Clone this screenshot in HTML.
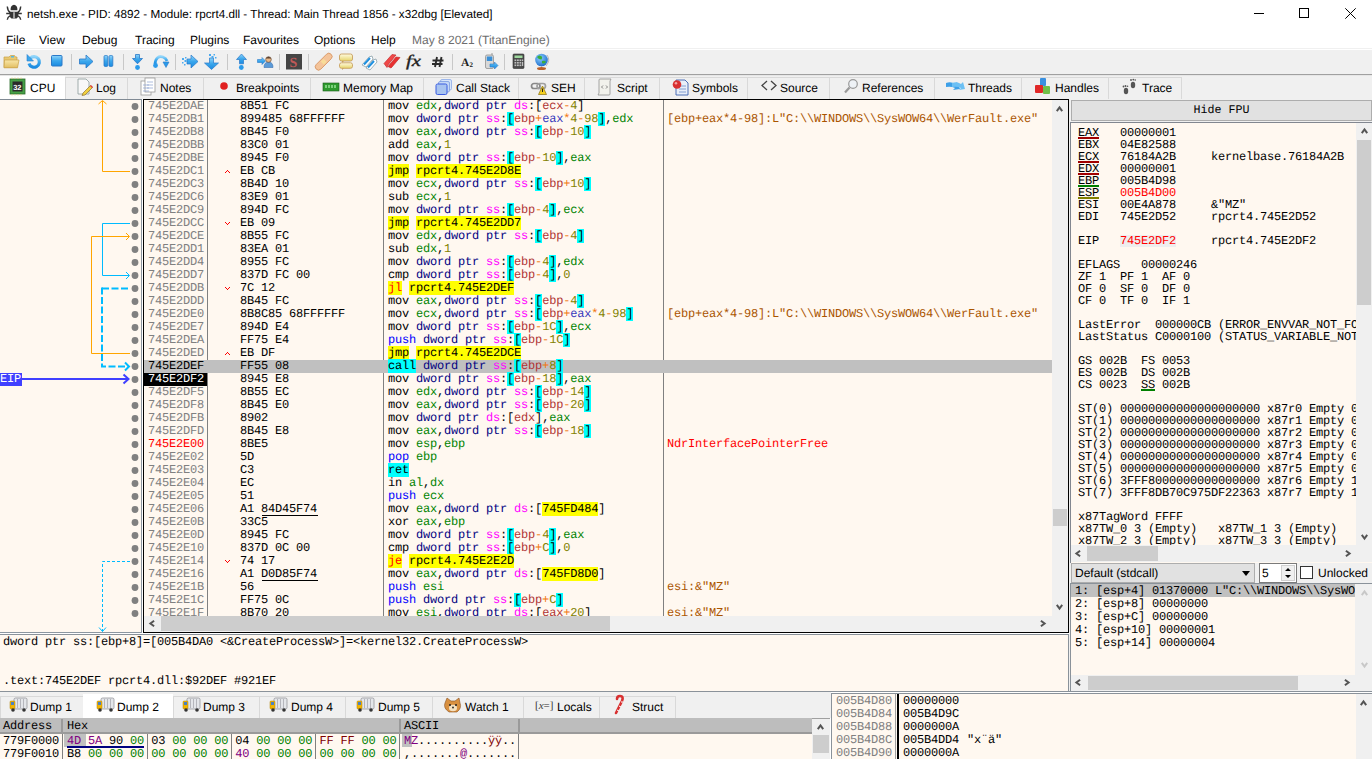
<!DOCTYPE html><html><head><meta charset="utf-8"><style>
*{box-sizing:border-box}
body{text-rendering:geometricPrecision;margin:0;width:1372px;height:759px;overflow:hidden;position:relative;background:#fff;font-family:"Liberation Sans",sans-serif;font-size:12px;color:#000}
.a{position:absolute}
.m{font-family:"Liberation Mono",monospace;font-size:12px;letter-spacing:-0.2px;white-space:pre;line-height:13px}
.s{font-family:"Liberation Sans",sans-serif;font-size:12px;white-space:pre}
.row{position:absolute;height:13px;line-height:13px;font-family:"Liberation Mono",monospace;font-size:12px;letter-spacing:-0.2px;white-space:pre}
.sb{position:absolute;background:#F0F0F0}
.thumb{position:absolute;background:#CDCDCD}
</style></head><body>

<div class="a" style="left:0;top:0;width:1372px;height:29px;background:#fff"></div>
<svg class="a" style="left:0;top:0" width="26" height="24" viewBox="0 0 26 24">
<path d="M7.3 6.5 Q7.6 11 10.5 12.8 M20.7 6.5 Q20.4 11 17.5 12.8 M6.2 13.5 H21.8 M10 15.8 Q7.6 16.8 7.3 19.8 M18 15.8 Q20.4 16.8 20.7 19.8" stroke="#333" stroke-width="1.4" fill="none"/>
<path d="M10.6 10.3 Q10.4 6.2 12.6 5.2 Q14 4.4 15.4 5.2 Q17.6 6.2 17.4 10.3 Z" fill="#333"/>
<path d="M9.6 11.8 H18.4 Q18.8 17.4 16.5 18.6 L11.5 18.6 Q9.2 17.4 9.6 11.8 Z" fill="#333"/>
<rect x="13.1" y="12.2" width="1.8" height="6.4" fill="#A8A8A8"/>
</svg>
<div class="a s" style="left:27px;top:8px;font-size:11.7px;color:#000">netsh.exe - PID: 4892 - Module: rpcrt4.dll - Thread: Main Thread 1856 - x32dbg [Elevated]</div>
<div class="a" style="left:1254px;top:13px;width:10px;height:1px;background:#000"></div>
<div class="a" style="left:1299px;top:8px;width:10px;height:10px;border:1px solid #000"></div>
<svg class="a" style="left:1345px;top:8px" width="11" height="11"><path d="M0.3 0.3 L10.7 10.7 M10.7 0.3 L0.3 10.7" stroke="#000" stroke-width="1"/></svg>
<div class="a s" style="left:6px;top:33px">File</div>
<div class="a s" style="left:39px;top:33px">View</div>
<div class="a s" style="left:82px;top:33px">Debug</div>
<div class="a s" style="left:135px;top:33px">Tracing</div>
<div class="a s" style="left:190px;top:33px">Plugins</div>
<div class="a s" style="left:243px;top:33px">Favourites</div>
<div class="a s" style="left:314px;top:33px">Options</div>
<div class="a s" style="left:371px;top:33px">Help</div>
<div class="a s" style="left:412px;top:33px;color:#6D6D6D">May 8 2021 (TitanEngine)</div>
<div class="a" style="left:0;top:48px;width:1372px;height:1px;background:#F0F0F0"></div>
<div class="a" style="left:0;top:50px;width:1372px;height:24px;background:#F0F0F0"></div>
<div class="a" style="left:0;top:74px;width:1372px;height:1px;background:#A0A0A0"></div>
<div class="a" style="left:0;top:75px;width:1372px;height:1px;background:#E6E6E6"></div>
<div class="a" style="left:0;top:76px;width:1372px;height:23px;background:#F0F0F0"></div>
<svg class="a" style="left:0;top:49px" width="560" height="25" viewBox="0 0 560 25">
<line x1="71.5" y1="5" x2="71.5" y2="21" stroke="#C8C8C8"/>
<line x1="123.5" y1="5" x2="123.5" y2="21" stroke="#C8C8C8"/>
<line x1="175.5" y1="5" x2="175.5" y2="21" stroke="#C8C8C8"/>
<line x1="227.5" y1="5" x2="227.5" y2="21" stroke="#C8C8C8"/>
<line x1="279.5" y1="5" x2="279.5" y2="21" stroke="#C8C8C8"/>
<line x1="308.5" y1="5" x2="308.5" y2="21" stroke="#C8C8C8"/>
<line x1="452.5" y1="5" x2="452.5" y2="21" stroke="#C8C8C8"/>
<line x1="504.5" y1="5" x2="504.5" y2="21" stroke="#C8C8C8"/>

<defs>
<linearGradient id="gb" x1="0" y1="0" x2="0" y2="1"><stop offset="0" stop-color="#8ED4FA"/><stop offset="0.5" stop-color="#3AA6EC"/><stop offset="1" stop-color="#1A8AE0"/></linearGradient>
<linearGradient id="gf" x1="0" y1="0" x2="0" y2="1"><stop offset="0" stop-color="#F8E6A8"/><stop offset="1" stop-color="#E2BE62"/></linearGradient>
<linearGradient id="gy" x1="0" y1="0" x2="0" y2="1"><stop offset="0" stop-color="#FFFBE0"/><stop offset="1" stop-color="#E6D46A"/></linearGradient>
<radialGradient id="gg" cx="0.4" cy="0.35" r="0.7"><stop offset="0" stop-color="#8ED0FF"/><stop offset="1" stop-color="#1A6ACC"/></radialGradient>
</defs>
<path d="M4 8 L9 8 L10.5 6.5 L14.5 6.5 L15.5 8 L17 8 L17 18.5 L4 18.5 Z" fill="#E8C870" stroke="#C8A048" stroke-width="0.7"/>
<rect x="11" y="7" width="3" height="1.5" fill="#5AB8E0"/>
<path d="M4.5 11 L19 11 L17.5 18.8 L4 18.8 Z" fill="url(#gf)" stroke="#C8A048" stroke-width="0.7"/>
<path d="M30 9.5 A5.3 5.3 0 1 1 29 14.5" fill="none" stroke="url(#gb)" stroke-width="3.2"/>
<path d="M27 5.5 L27 12 L33.5 12 Z" fill="#3AA6EC" stroke="#2A80D0" stroke-width="0.6"/>
<rect x="51.5" y="6.5" width="10.5" height="10.5" rx="1" fill="url(#gb)" stroke="#2A78C8" stroke-width="1"/>
<path d="M79.5 10 L86 10 L86 6 L93 12.5 L86 19 L86 15 L79.5 15 Z" fill="url(#gb)" stroke="#2A78C8" stroke-width="0.8"/>
<rect x="104" y="6.5" width="3.8" height="11" rx="1.2" fill="url(#gb)" stroke="#2A78C8" stroke-width="0.8"/><rect x="109" y="6.5" width="3.8" height="11" rx="1.2" fill="url(#gb)" stroke="#2A78C8" stroke-width="0.8"/>
<path d="M135.5 5.5 L139.5 5.5 L139.5 9.5 L142.5 9.5 L137.5 14.8 L132.5 9.5 L135.5 9.5 Z" fill="url(#gb)" stroke="#2A78C8" stroke-width="0.8"/><circle cx="137.5" cy="18.5" r="2.4" fill="#2A9AEA"/>
<path d="M155 15 Q156 6 163 8 Q166 9 167 12" fill="none" stroke="url(#gb)" stroke-width="2.8"/><path d="M163 13 L169 13 L166 18.5 Z" fill="#2A9AEA" stroke="#2A78C8" stroke-width="0.6"/><circle cx="155.5" cy="16.5" r="2.4" fill="#2A9AEA"/>
<path d="M187 10 L191 10 L191 6 L198 12.5 L191 19 L191 15 L187 15 Z" fill="url(#gb)" stroke="#2A78C8" stroke-width="0.7"/>
<g fill="#4AAAF0"><rect x="182" y="9" width="2" height="2"/><rect x="184.5" y="11" width="2" height="2"/><rect x="182" y="13" width="1.5" height="1.5"/><rect x="185" y="8" width="1.5" height="1.5"/><rect x="184" y="15" width="1.5" height="1.5"/></g>
<path d="M209.5 9 L213.5 9 L213.5 14 L218.5 14 L211.5 20.5 L204.5 14 L209.5 14 Z" fill="url(#gb)" stroke="#2A78C8" stroke-width="0.7"/>
<g fill="#4AAAF0"><rect x="209" y="5" width="2" height="2"/><rect x="211.5" y="7" width="2" height="2"/><rect x="213.5" y="5" width="1.5" height="1.5"/><rect x="215" y="8" width="1.5" height="1.5"/></g>
<path d="M241.5 5 L246.5 10.5 L243.5 10.5 L243.5 14.8 L239.5 14.8 L239.5 10.5 L236.5 10.5 Z" fill="url(#gb)" stroke="#2A78C8" stroke-width="0.7"/><circle cx="241.3" cy="18.5" r="2.4" fill="#2A9AEA"/>
<path d="M257.5 10.5 L262 10.5 L262 8.5 L265.5 12 L262 15.5 L262 13.5 L257.5 13.5 Z" fill="url(#gb)" stroke="#2A78C8" stroke-width="0.6"/>
<path d="M264 18.5 Q264 13 268.5 13 Q273 13 273 18.5 Z" fill="#5A9AD8" stroke="#3A70B0" stroke-width="0.6"/><circle cx="268.5" cy="10.5" r="2.8" fill="#E8B888" stroke="#5A4030" stroke-width="0.6"/><path d="M265.7 9.5 Q268.5 6 271.3 9.5" fill="#5A4030"/>
<rect x="286" y="5" width="16" height="15.5" fill="#454545"/><text x="289.5" y="17.5" font-family="Liberation Serif" font-size="14" font-weight="bold" fill="#C05858">S</text>
<g transform="rotate(-45 323.5 12.5)"><rect x="313" y="9.5" width="21" height="6.5" rx="3.2" fill="#F4C49A" stroke="#D89868" stroke-width="0.9"/><rect x="321.5" y="10.5" width="4" height="4.5" fill="#F8DC98"/></g>
<rect x="339.5" y="5" width="13" height="7" rx="2" fill="url(#gy)" stroke="#C8A060" stroke-width="0.9"/><path d="M342 12 L342 14 L344 12 Z" fill="#C8A060"/>
<rect x="339.5" y="13.8" width="13" height="5.5" rx="2" fill="url(#gy)" stroke="#C8A060" stroke-width="0.9"/><path d="M342 19.3 L342 21 L344 19.3 Z" fill="#C8A060"/>
<path d="M362 16 L369 8 L372 7 L373 10 L366 18 Z" fill="#fff" stroke="#8AA0A8" stroke-width="0.8"/><path d="M364 15.5 L370 9" stroke="#1E90E0" stroke-width="2"/>
<path d="M366 19 L373 11 L376 10 L377 13 L370 21 Z" fill="#fff" stroke="#8AA0A8" stroke-width="0.8"/><path d="M368 18.5 L374 12" stroke="#1E90E0" stroke-width="2"/>
<path d="M384 14.5 L392 5.5 L396 6 L388 16 L387 18.5 Z" fill="#F04848" stroke="#C02020" stroke-width="0.6"/><path d="M388 17.5 L396 8 L400 8.5 L392 18 L391 19 Z" fill="#E83030" stroke="#C02020" stroke-width="0.6"/>
<text x="406" y="17" font-family="Liberation Serif" font-size="16" font-style="italic" fill="#222" stroke="#222" stroke-width="0.35" textLength="15" lengthAdjust="spacingAndGlyphs">fx</text>
<path d="M437 8 L435 18 M441.5 8 L439.5 18 M432.5 11.5 H443.5 M432 15 H442.5" stroke="#2a2a2a" stroke-width="1.9"/>
<text x="461" y="17" font-family="Liberation Serif" font-size="11.5" font-weight="bold" fill="#222">A</text><text x="469.5" y="17.5" font-family="Liberation Serif" font-size="7" font-weight="bold" fill="#222">2</text>
<rect x="485.5" y="6" width="8" height="13.5" rx="1.5" fill="#D8D8D8" stroke="#909090" stroke-width="0.8"/><rect x="486.8" y="7.5" width="5.5" height="4.5" fill="#3A90D8"/><path d="M492 6 L492 4" stroke="#888" stroke-width="0.8"/>
<path d="M490 15 L494.5 15 L494.5 13 L498 16.5 L494.5 20 L494.5 18 L490 18 Z" fill="url(#gb)" stroke="#2A78C8" stroke-width="0.6"/>
<rect x="513" y="5" width="11" height="14.5" rx="1" fill="#4A4A4A" stroke="#333" stroke-width="0.6"/><rect x="514.5" y="6.5" width="8" height="2.5" fill="#9ED89E"/>
<g fill="#BEBEBE"><rect x="514.5" y="10.5" width="1.8" height="1.6"/><rect x="517" y="10.5" width="1.8" height="1.6"/><rect x="519.5" y="10.5" width="1.8" height="1.6"/><rect x="522" y="10.5" width="1.2" height="1.6"/><rect x="514.5" y="13" width="1.8" height="1.6"/><rect x="517" y="13" width="1.8" height="1.6"/><rect x="519.5" y="13" width="1.8" height="1.6"/><rect x="522" y="13" width="1.2" height="4"/><rect x="514.5" y="15.5" width="1.8" height="1.6"/><rect x="517" y="15.5" width="1.8" height="1.6"/><rect x="519.5" y="15.5" width="1.8" height="1.6"/></g>
<path d="M547 6 Q551 11 546 17" fill="none" stroke="#B8B8B8" stroke-width="1"/>
<circle cx="541.5" cy="11" r="6.3" fill="url(#gg)"/><path d="M537 8 Q539 5.5 541 7 Q543 8 541.5 10.5 Q539 11 537 8 Z M542 12 Q545 11 546 13 Q544 15.5 542 14 Z" fill="#3AAE3A"/>
<path d="M541.5 17.5 V19" stroke="#999" stroke-width="1"/><ellipse cx="541.5" cy="19.5" rx="4.5" ry="1.5" fill="#B8602A"/>

</svg>
<div class="a" style="left:0px;top:76px;width:65px;height:23px;background:#fff"></div>
<div class="a s" style="left:30px;top:81px">CPU</div>
<div class="a" style="left:65px;top:77px;width:63px;height:22px;background:#F0F0F0;border:1px solid #D9D9D9;border-bottom:none"></div>
<div class="a s" style="left:96px;top:81px">Log</div>
<div class="a" style="left:127px;top:77px;width:77px;height:22px;background:#F0F0F0;border:1px solid #D9D9D9;border-bottom:none"></div>
<div class="a s" style="left:160px;top:81px">Notes</div>
<div class="a" style="left:203px;top:77px;width:108px;height:22px;background:#F0F0F0;border:1px solid #D9D9D9;border-bottom:none"></div>
<div class="a s" style="left:236px;top:81px">Breakpoints</div>
<div class="a" style="left:310px;top:77px;width:114px;height:22px;background:#F0F0F0;border:1px solid #D9D9D9;border-bottom:none"></div>
<div class="a s" style="left:343px;top:81px">Memory Map</div>
<div class="a" style="left:423px;top:77px;width:96px;height:22px;background:#F0F0F0;border:1px solid #D9D9D9;border-bottom:none"></div>
<div class="a s" style="left:456px;top:81px">Call Stack</div>
<div class="a" style="left:518px;top:77px;width:67px;height:22px;background:#F0F0F0;border:1px solid #D9D9D9;border-bottom:none"></div>
<div class="a s" style="left:551px;top:81px">SEH</div>
<div class="a" style="left:584px;top:77px;width:76px;height:22px;background:#F0F0F0;border:1px solid #D9D9D9;border-bottom:none"></div>
<div class="a s" style="left:617px;top:81px">Script</div>
<div class="a" style="left:659px;top:77px;width:89px;height:22px;background:#F0F0F0;border:1px solid #D9D9D9;border-bottom:none"></div>
<div class="a s" style="left:692px;top:81px">Symbols</div>
<div class="a" style="left:747px;top:77px;width:83px;height:22px;background:#F0F0F0;border:1px solid #D9D9D9;border-bottom:none"></div>
<div class="a s" style="left:780px;top:81px">Source</div>
<div class="a" style="left:829px;top:77px;width:106px;height:22px;background:#F0F0F0;border:1px solid #D9D9D9;border-bottom:none"></div>
<div class="a s" style="left:862px;top:81px">References</div>
<div class="a" style="left:934px;top:77px;width:88px;height:22px;background:#F0F0F0;border:1px solid #D9D9D9;border-bottom:none"></div>
<div class="a s" style="left:968px;top:81px">Threads</div>
<div class="a" style="left:1021px;top:77px;width:88px;height:22px;background:#F0F0F0;border:1px solid #D9D9D9;border-bottom:none"></div>
<div class="a s" style="left:1055px;top:81px">Handles</div>
<div class="a" style="left:1108px;top:77px;width:74px;height:22px;background:#F0F0F0;border:1px solid #D9D9D9;border-bottom:none"></div>
<div class="a s" style="left:1142px;top:81px">Trace</div>
<svg class="a" style="left:0;top:75px" width="1200" height="24" viewBox="0 0 1200 24">

<rect x="10" y="4" width="15" height="15" fill="#46A046" stroke="#2A6A2A" stroke-width="0.8"/>
<g stroke="#E8D080" stroke-width="0.8"><path d="M12 4 V2.5 M15 4 V2.5 M18 4 V2.5 M21 4 V2.5 M12 19 V20.5 M15 19 V20.5 M18 19 V20.5 M21 19 V20.5"/></g>
<rect x="12.5" y="6.5" width="10" height="10" fill="#2a2a2a"/><text x="13.2" y="14.6" font-family="Liberation Sans" font-size="7.5" font-weight="bold" fill="#fff">32</text>
<path d="M78 4 L86 4 L89 7 L89 19 L78 19 Z" fill="#F8F8F8" stroke="#8A9A9A" stroke-width="0.8"/><path d="M83 18 L90.5 10.5 L92.5 12.5 L85 20 L82 20.5 Z" fill="#F0D040" stroke="#806020" stroke-width="0.6"/><path d="M90.5 10.5 L92.5 12.5" stroke="#E04040" stroke-width="1.5"/>
<rect x="141" y="6" width="10" height="14" fill="#fff" stroke="#999" stroke-width="0.8"/><rect x="145" y="3" width="10" height="14" fill="#fff" stroke="#999" stroke-width="0.8"/><path d="M143 10 H149 M143 13 H149 M143 16 H149 M147 7 H153 M147 10 H153 M147 13 H153" stroke="#8AA0D0" stroke-width="0.7"/>
<circle cx="224" cy="11" r="3.8" fill="#E02020"/>
<rect x="323" y="8" width="16" height="8" fill="#2E9A2E" stroke="#1A5A1A" stroke-width="0.6"/><g fill="#7CD07C"><rect x="325" y="10" width="2" height="3"/><rect x="328" y="10" width="2" height="3"/><rect x="331" y="10" width="2" height="3"/><rect x="334" y="10" width="2" height="3"/></g>
<rect x="440.5" y="4.5" width="11" height="10.5" rx="1.5" fill="#D8E6FA" stroke="#8AAAE8" stroke-width="0.8"/><rect x="438.5" y="6.5" width="11" height="10.5" rx="1.5" fill="#C4D8F6" stroke="#7A9AE0" stroke-width="0.8"/><rect x="436" y="9" width="11" height="10.5" rx="1.5" fill="#A8C4F0" stroke="#3A5CE0" stroke-width="1"/>
<rect x="531.5" y="8.5" width="8.5" height="5" rx="2.5" fill="none" stroke="#888" stroke-width="1.7"/><rect x="537" y="8.5" width="8.5" height="5" rx="2.5" fill="none" stroke="#A0A0A0" stroke-width="1.7"/><path d="M538.5 19.5 L542.5 11 L546.5 19.5 Z" fill="#F4D020" stroke="#8A7010" stroke-width="0.7"/><path d="M542.5 13.5 V17" stroke="#222" stroke-width="1"/>
<path d="M599 5 Q599 4 600 4 L611 4 L610 6 L610 19 Q610 20 609 20 L598 20 L599 18 Z" fill="#F2F2EC" stroke="#909090" stroke-width="0.8"/><path d="M603 10.5 L601.5 12 L603 13.5 M606 10.5 L607.5 12 L606 13.5" stroke="#666" stroke-width="0.8" fill="none"/>
<path d="M676 5 L685 5 L688 8 L688 20 L676 20 Z" fill="#E8EEF8" stroke="#3A60B0" stroke-width="0.9"/><path d="M679 11 H686 M679 14 H686 M679 17 H686" stroke="#6A8AC8" stroke-width="0.8"/><circle cx="677" cy="9.5" r="4.3" fill="#D83030"/><circle cx="676" cy="8.3" r="1.3" fill="#F4A0A0"/>
<path d="M767 6 L762 10.5 L767 15 M771 6 L776 10.5 L771 15" stroke="#444" stroke-width="1.3" fill="none"/>
<circle cx="853" cy="9" r="4.3" fill="#EEF2F6" stroke="#999" stroke-width="1.2"/><path d="M849.5 12.5 L845 17.5" stroke="#999" stroke-width="2.2"/>
<path d="M946 8 Q951 6 955 9 L957 7 L960 14 L953 15 L955 13 Q951 11 946 12 Z" fill="#3EA0E8"/><path d="M952 8 Q957 6 961 9 L963 7 L965 14 L959 15 L961 13 Q957 11 952 12 Z" fill="#6CC0F4"/>
<rect x="1040" y="3" width="6" height="8" rx="1" fill="#3A90E0"/><rect x="1035" y="10" width="8" height="8" rx="1" fill="#E02828"/><rect x="1043" y="11" width="7" height="8" rx="1" fill="#70C048"/>
<g fill="#555"><ellipse cx="1126" cy="16" rx="2.2" ry="3.3"/><ellipse cx="1133" cy="10" rx="2.2" ry="3.3"/><circle cx="1123.5" cy="11.5" r="0.9"/><circle cx="1125.5" cy="11" r="0.9"/><circle cx="1127.5" cy="11.3" r="0.8"/><circle cx="1131" cy="5" r="0.9"/><circle cx="1133.3" cy="4.6" r="0.9"/><circle cx="1135.2" cy="5" r="0.8"/></g>

</svg>
<div class="a" style="left:0;top:99px;width:142px;height:534px;background:#FFF8F0;border-top:1px solid #808A94;border-right:1px solid #8C96A0;border-bottom:1px solid #8C96A0"></div>
<div class="a" style="left:143px;top:99px;width:926px;height:534px;background:#FFF8F0;border:1px solid #000"></div>
<div class="a" style="left:207px;top:100px;width:1px;height:516px;background:#808080"></div>
<div class="a" style="left:383px;top:100px;width:1px;height:516px;background:#808080"></div>
<div class="a" style="left:663px;top:100px;width:1px;height:516px;background:#808080"></div>
<div class="a" style="left:144px;top:100px;width:908px;height:516px;overflow:hidden">
<div class="row" style="left:4px;top:0px;color:#808080">745E2DAE</div>
<div class="row" style="left:96px;top:0px;color:#000">8B51 FC</div>
<div class="row" style="left:244px;top:0px"><span style="color:#000;">mov</span> <span style="color:#008300;">edx</span><span style="color:#000;">,</span><span style="color:#000080;">dword ptr </span><span style="color:#FF00FF;">ds</span><span style="color:#000;">:</span><span style="color:#000;">[</span><span style="color:#B03434;">ecx</span><span style="color:#F27711;">-</span><span style="color:#828200;">4</span><span style="color:#000;">]</span></div>
<div class="row" style="left:4px;top:13px;color:#808080">745E2DB1</div>
<div class="row" style="left:96px;top:13px;color:#000">899485 68FFFFFF</div>
<div class="row" style="left:244px;top:13px"><span style="color:#000;">mov</span> <span style="color:#000080;">dword ptr </span><span style="color:#FF00FF;">ss</span><span style="color:#000;">:</span><span style="color:#000;background:#00FFFF;">[</span><span style="color:#B03434;">ebp</span><span style="color:#F27711;">+</span><span style="color:#3838BC;">eax</span><span style="color:#F27711;">*</span><span style="color:#828200;">4</span><span style="color:#F27711;">-</span><span style="color:#828200;">98</span><span style="color:#000;background:#00FFFF;">]</span><span style="color:#000;">,</span><span style="color:#008300;">edx</span></div>
<div class="row" style="left:523px;top:13px;color:#AA5500">[ebp+eax*4-98]:L&quot;C:\\WINDOWS\\SysWOW64\\WerFault.exe&quot;</div>
<div class="row" style="left:4px;top:26px;color:#808080">745E2DB8</div>
<div class="row" style="left:96px;top:26px;color:#000">8B45 F0</div>
<div class="row" style="left:244px;top:26px"><span style="color:#000;">mov</span> <span style="color:#008300;">eax</span><span style="color:#000;">,</span><span style="color:#000080;">dword ptr </span><span style="color:#FF00FF;">ss</span><span style="color:#000;">:</span><span style="color:#000;background:#00FFFF;">[</span><span style="color:#B03434;">ebp</span><span style="color:#F27711;">-</span><span style="color:#828200;">10</span><span style="color:#000;background:#00FFFF;">]</span></div>
<div class="row" style="left:4px;top:39px;color:#808080">745E2DBB</div>
<div class="row" style="left:96px;top:39px;color:#000">83C0 01</div>
<div class="row" style="left:244px;top:39px"><span style="color:#000;">add</span> <span style="color:#008300;">eax</span><span style="color:#000;">,</span><span style="color:#828200;">1</span></div>
<div class="row" style="left:4px;top:52px;color:#808080">745E2DBE</div>
<div class="row" style="left:96px;top:52px;color:#000">8945 F0</div>
<div class="row" style="left:244px;top:52px"><span style="color:#000;">mov</span> <span style="color:#000080;">dword ptr </span><span style="color:#FF00FF;">ss</span><span style="color:#000;">:</span><span style="color:#000;background:#00FFFF;">[</span><span style="color:#B03434;">ebp</span><span style="color:#F27711;">-</span><span style="color:#828200;">10</span><span style="color:#000;background:#00FFFF;">]</span><span style="color:#000;">,</span><span style="color:#008300;">eax</span></div>
<div class="row" style="left:4px;top:65px;color:#808080">745E2DC1</div>
<div class="a" style="left:81px;top:72px;width:1px;height:1px;background:#FF0000"></div>
<div class="a" style="left:82px;top:71px;width:1px;height:1px;background:#FF0000"></div>
<div class="a" style="left:83px;top:70px;width:1px;height:1px;background:#FF0000"></div>
<div class="a" style="left:84px;top:71px;width:1px;height:1px;background:#FF0000"></div>
<div class="a" style="left:85px;top:72px;width:1px;height:1px;background:#FF0000"></div>
<div class="row" style="left:96px;top:65px;color:#000">EB CB</div>
<div class="row" style="left:244px;top:65px"><span style="color:#000;background:#FFFF00;">jmp</span> <span style="color:#000;background:#FFFF00;">rpcrt4.745E2D8E</span></div>
<div class="row" style="left:4px;top:78px;color:#808080">745E2DC3</div>
<div class="row" style="left:96px;top:78px;color:#000">8B4D 10</div>
<div class="row" style="left:244px;top:78px"><span style="color:#000;">mov</span> <span style="color:#008300;">ecx</span><span style="color:#000;">,</span><span style="color:#000080;">dword ptr </span><span style="color:#FF00FF;">ss</span><span style="color:#000;">:</span><span style="color:#000;background:#00FFFF;">[</span><span style="color:#B03434;">ebp</span><span style="color:#F27711;">+</span><span style="color:#828200;">10</span><span style="color:#000;background:#00FFFF;">]</span></div>
<div class="row" style="left:4px;top:91px;color:#808080">745E2DC6</div>
<div class="row" style="left:96px;top:91px;color:#000">83E9 01</div>
<div class="row" style="left:244px;top:91px"><span style="color:#000;">sub</span> <span style="color:#008300;">ecx</span><span style="color:#000;">,</span><span style="color:#828200;">1</span></div>
<div class="row" style="left:4px;top:104px;color:#808080">745E2DC9</div>
<div class="row" style="left:96px;top:104px;color:#000">894D FC</div>
<div class="row" style="left:244px;top:104px"><span style="color:#000;">mov</span> <span style="color:#000080;">dword ptr </span><span style="color:#FF00FF;">ss</span><span style="color:#000;">:</span><span style="color:#000;background:#00FFFF;">[</span><span style="color:#B03434;">ebp</span><span style="color:#F27711;">-</span><span style="color:#828200;">4</span><span style="color:#000;background:#00FFFF;">]</span><span style="color:#000;">,</span><span style="color:#008300;">ecx</span></div>
<div class="row" style="left:4px;top:117px;color:#808080">745E2DCC</div>
<div class="a" style="left:81px;top:122px;width:1px;height:1px;background:#FF0000"></div>
<div class="a" style="left:82px;top:123px;width:1px;height:1px;background:#FF0000"></div>
<div class="a" style="left:83px;top:124px;width:1px;height:1px;background:#FF0000"></div>
<div class="a" style="left:84px;top:123px;width:1px;height:1px;background:#FF0000"></div>
<div class="a" style="left:85px;top:122px;width:1px;height:1px;background:#FF0000"></div>
<div class="row" style="left:96px;top:117px;color:#000">EB 09</div>
<div class="row" style="left:244px;top:117px"><span style="color:#000;background:#FFFF00;">jmp</span> <span style="color:#000;background:#FFFF00;">rpcrt4.745E2DD7</span></div>
<div class="row" style="left:4px;top:130px;color:#808080">745E2DCE</div>
<div class="row" style="left:96px;top:130px;color:#000">8B55 FC</div>
<div class="row" style="left:244px;top:130px"><span style="color:#000;">mov</span> <span style="color:#008300;">edx</span><span style="color:#000;">,</span><span style="color:#000080;">dword ptr </span><span style="color:#FF00FF;">ss</span><span style="color:#000;">:</span><span style="color:#000;background:#00FFFF;">[</span><span style="color:#B03434;">ebp</span><span style="color:#F27711;">-</span><span style="color:#828200;">4</span><span style="color:#000;background:#00FFFF;">]</span></div>
<div class="row" style="left:4px;top:143px;color:#808080">745E2DD1</div>
<div class="row" style="left:96px;top:143px;color:#000">83EA 01</div>
<div class="row" style="left:244px;top:143px"><span style="color:#000;">sub</span> <span style="color:#008300;">edx</span><span style="color:#000;">,</span><span style="color:#828200;">1</span></div>
<div class="row" style="left:4px;top:156px;color:#808080">745E2DD4</div>
<div class="row" style="left:96px;top:156px;color:#000">8955 FC</div>
<div class="row" style="left:244px;top:156px"><span style="color:#000;">mov</span> <span style="color:#000080;">dword ptr </span><span style="color:#FF00FF;">ss</span><span style="color:#000;">:</span><span style="color:#000;background:#00FFFF;">[</span><span style="color:#B03434;">ebp</span><span style="color:#F27711;">-</span><span style="color:#828200;">4</span><span style="color:#000;background:#00FFFF;">]</span><span style="color:#000;">,</span><span style="color:#008300;">edx</span></div>
<div class="row" style="left:4px;top:169px;color:#808080">745E2DD7</div>
<div class="row" style="left:96px;top:169px;color:#000">837D FC 00</div>
<div class="row" style="left:244px;top:169px"><span style="color:#000;">cmp</span> <span style="color:#000080;">dword ptr </span><span style="color:#FF00FF;">ss</span><span style="color:#000;">:</span><span style="color:#000;background:#00FFFF;">[</span><span style="color:#B03434;">ebp</span><span style="color:#F27711;">-</span><span style="color:#828200;">4</span><span style="color:#000;background:#00FFFF;">]</span><span style="color:#000;">,</span><span style="color:#828200;">0</span></div>
<div class="row" style="left:4px;top:182px;color:#808080">745E2DDB</div>
<div class="a" style="left:81px;top:187px;width:1px;height:1px;background:#FF0000"></div>
<div class="a" style="left:82px;top:188px;width:1px;height:1px;background:#FF0000"></div>
<div class="a" style="left:83px;top:189px;width:1px;height:1px;background:#FF0000"></div>
<div class="a" style="left:84px;top:188px;width:1px;height:1px;background:#FF0000"></div>
<div class="a" style="left:85px;top:187px;width:1px;height:1px;background:#FF0000"></div>
<div class="row" style="left:96px;top:182px;color:#000">7C 12</div>
<div class="row" style="left:244px;top:182px"><span style="color:#FF0000;background:#FFFF00;">jl</span> <span style="color:#000;background:#FFFF00;">rpcrt4.745E2DEF</span></div>
<div class="row" style="left:4px;top:195px;color:#808080">745E2DDD</div>
<div class="row" style="left:96px;top:195px;color:#000">8B45 FC</div>
<div class="row" style="left:244px;top:195px"><span style="color:#000;">mov</span> <span style="color:#008300;">eax</span><span style="color:#000;">,</span><span style="color:#000080;">dword ptr </span><span style="color:#FF00FF;">ss</span><span style="color:#000;">:</span><span style="color:#000;background:#00FFFF;">[</span><span style="color:#B03434;">ebp</span><span style="color:#F27711;">-</span><span style="color:#828200;">4</span><span style="color:#000;background:#00FFFF;">]</span></div>
<div class="row" style="left:4px;top:208px;color:#808080">745E2DE0</div>
<div class="row" style="left:96px;top:208px;color:#000">8B8C85 68FFFFFF</div>
<div class="row" style="left:244px;top:208px"><span style="color:#000;">mov</span> <span style="color:#008300;">ecx</span><span style="color:#000;">,</span><span style="color:#000080;">dword ptr </span><span style="color:#FF00FF;">ss</span><span style="color:#000;">:</span><span style="color:#000;background:#00FFFF;">[</span><span style="color:#B03434;">ebp</span><span style="color:#F27711;">+</span><span style="color:#3838BC;">eax</span><span style="color:#F27711;">*</span><span style="color:#828200;">4</span><span style="color:#F27711;">-</span><span style="color:#828200;">98</span><span style="color:#000;background:#00FFFF;">]</span></div>
<div class="row" style="left:523px;top:208px;color:#AA5500">[ebp+eax*4-98]:L&quot;C:\\WINDOWS\\SysWOW64\\WerFault.exe&quot;</div>
<div class="row" style="left:4px;top:221px;color:#808080">745E2DE7</div>
<div class="row" style="left:96px;top:221px;color:#000">894D E4</div>
<div class="row" style="left:244px;top:221px"><span style="color:#000;">mov</span> <span style="color:#000080;">dword ptr </span><span style="color:#FF00FF;">ss</span><span style="color:#000;">:</span><span style="color:#000;background:#00FFFF;">[</span><span style="color:#B03434;">ebp</span><span style="color:#F27711;">-</span><span style="color:#828200;">1C</span><span style="color:#000;background:#00FFFF;">]</span><span style="color:#000;">,</span><span style="color:#008300;">ecx</span></div>
<div class="row" style="left:4px;top:234px;color:#808080">745E2DEA</div>
<div class="row" style="left:96px;top:234px;color:#000">FF75 E4</div>
<div class="row" style="left:244px;top:234px"><span style="color:#0000FF;">push</span> <span style="color:#000080;">dword ptr </span><span style="color:#FF00FF;">ss</span><span style="color:#000;">:</span><span style="color:#000;background:#00FFFF;">[</span><span style="color:#B03434;">ebp</span><span style="color:#F27711;">-</span><span style="color:#828200;">1C</span><span style="color:#000;background:#00FFFF;">]</span></div>
<div class="row" style="left:4px;top:247px;color:#808080">745E2DED</div>
<div class="a" style="left:81px;top:254px;width:1px;height:1px;background:#FF0000"></div>
<div class="a" style="left:82px;top:253px;width:1px;height:1px;background:#FF0000"></div>
<div class="a" style="left:83px;top:252px;width:1px;height:1px;background:#FF0000"></div>
<div class="a" style="left:84px;top:253px;width:1px;height:1px;background:#FF0000"></div>
<div class="a" style="left:85px;top:254px;width:1px;height:1px;background:#FF0000"></div>
<div class="row" style="left:96px;top:247px;color:#000">EB DF</div>
<div class="row" style="left:244px;top:247px"><span style="color:#000;background:#FFFF00;">jmp</span> <span style="color:#000;background:#FFFF00;">rpcrt4.745E2DCE</span></div>
<div class="a" style="left:0;top:260px;width:908px;height:13px;background:#C0C0C0"></div>
<div class="row" style="left:4px;top:260px;color:#000">745E2DEF</div>
<div class="row" style="left:96px;top:260px;color:#000">FF55 08</div>
<div class="row" style="left:244px;top:260px"><span style="color:#000;background:#00FFFF;">call</span> <span style="color:#000080;">dword ptr </span><span style="color:#FF00FF;">ss</span><span style="color:#000;">:</span><span style="color:#000;background:#00FFFF;">[</span><span style="color:#B03434;">ebp</span><span style="color:#F27711;">+</span><span style="color:#828200;">8</span><span style="color:#000;background:#00FFFF;">]</span></div>
<div class="a" style="left:0;top:273px;width:63px;height:13px;background:#000"></div>
<div class="row" style="left:4px;top:273px;color:#fff">745E2DF2</div>
<div class="row" style="left:96px;top:273px;color:#000">8945 E8</div>
<div class="row" style="left:244px;top:273px"><span style="color:#000;">mov</span> <span style="color:#000080;">dword ptr </span><span style="color:#FF00FF;">ss</span><span style="color:#000;">:</span><span style="color:#000;background:#00FFFF;">[</span><span style="color:#B03434;">ebp</span><span style="color:#F27711;">-</span><span style="color:#828200;">18</span><span style="color:#000;background:#00FFFF;">]</span><span style="color:#000;">,</span><span style="color:#008300;">eax</span></div>
<div class="row" style="left:4px;top:286px;color:#808080">745E2DF5</div>
<div class="row" style="left:96px;top:286px;color:#000">8B55 EC</div>
<div class="row" style="left:244px;top:286px"><span style="color:#000;">mov</span> <span style="color:#008300;">edx</span><span style="color:#000;">,</span><span style="color:#000080;">dword ptr </span><span style="color:#FF00FF;">ss</span><span style="color:#000;">:</span><span style="color:#000;background:#00FFFF;">[</span><span style="color:#B03434;">ebp</span><span style="color:#F27711;">-</span><span style="color:#828200;">14</span><span style="color:#000;background:#00FFFF;">]</span></div>
<div class="row" style="left:4px;top:299px;color:#808080">745E2DF8</div>
<div class="row" style="left:96px;top:299px;color:#000">8B45 E0</div>
<div class="row" style="left:244px;top:299px"><span style="color:#000;">mov</span> <span style="color:#008300;">eax</span><span style="color:#000;">,</span><span style="color:#000080;">dword ptr </span><span style="color:#FF00FF;">ss</span><span style="color:#000;">:</span><span style="color:#000;background:#00FFFF;">[</span><span style="color:#B03434;">ebp</span><span style="color:#F27711;">-</span><span style="color:#828200;">20</span><span style="color:#000;background:#00FFFF;">]</span></div>
<div class="row" style="left:4px;top:312px;color:#808080">745E2DFB</div>
<div class="row" style="left:96px;top:312px;color:#000">8902</div>
<div class="row" style="left:244px;top:312px"><span style="color:#000;">mov</span> <span style="color:#000080;">dword ptr </span><span style="color:#FF00FF;">ds</span><span style="color:#000;">:</span><span style="color:#000;">[</span><span style="color:#B03434;">edx</span><span style="color:#000;">]</span><span style="color:#000;">,</span><span style="color:#008300;">eax</span></div>
<div class="row" style="left:4px;top:325px;color:#808080">745E2DFD</div>
<div class="row" style="left:96px;top:325px;color:#000">8B45 E8</div>
<div class="row" style="left:244px;top:325px"><span style="color:#000;">mov</span> <span style="color:#008300;">eax</span><span style="color:#000;">,</span><span style="color:#000080;">dword ptr </span><span style="color:#FF00FF;">ss</span><span style="color:#000;">:</span><span style="color:#000;background:#00FFFF;">[</span><span style="color:#B03434;">ebp</span><span style="color:#F27711;">-</span><span style="color:#828200;">18</span><span style="color:#000;background:#00FFFF;">]</span></div>
<div class="row" style="left:4px;top:338px;color:#FF0000">745E2E00</div>
<div class="row" style="left:96px;top:338px;color:#000">8BE5</div>
<div class="row" style="left:244px;top:338px"><span style="color:#000;">mov</span> <span style="color:#008300;">esp</span><span style="color:#000;">,</span><span style="color:#008300;">ebp</span></div>
<div class="row" style="left:523px;top:338px;color:#FF0000">NdrInterfacePointerFree</div>
<div class="row" style="left:4px;top:351px;color:#808080">745E2E02</div>
<div class="row" style="left:96px;top:351px;color:#000">5D</div>
<div class="row" style="left:244px;top:351px"><span style="color:#0000FF;">pop</span> <span style="color:#008300;">ebp</span></div>
<div class="row" style="left:4px;top:364px;color:#808080">745E2E03</div>
<div class="row" style="left:96px;top:364px;color:#000">C3</div>
<div class="row" style="left:244px;top:364px"><span style="color:#000;background:#00FFFF;">ret</span></div>
<div class="row" style="left:4px;top:377px;color:#808080">745E2E04</div>
<div class="row" style="left:96px;top:377px;color:#000">EC</div>
<div class="row" style="left:244px;top:377px"><span style="color:#000;">in</span> <span style="color:#008300;">al</span><span style="color:#000;">,</span><span style="color:#008300;">dx</span></div>
<div class="row" style="left:4px;top:390px;color:#808080">745E2E05</div>
<div class="row" style="left:96px;top:390px;color:#000">51</div>
<div class="row" style="left:244px;top:390px"><span style="color:#0000FF;">push</span> <span style="color:#008300;">ecx</span></div>
<div class="row" style="left:4px;top:403px;color:#808080">745E2E06</div>
<div class="a" style="left:118px;top:415px;width:56px;height:1px;background:#000"></div>
<div class="row" style="left:96px;top:403px;color:#000">A1 84D45F74</div>
<div class="row" style="left:244px;top:403px"><span style="color:#000;">mov</span> <span style="color:#008300;">eax</span><span style="color:#000;">,</span><span style="color:#000080;">dword ptr </span><span style="color:#FF00FF;">ds</span><span style="color:#000;">:</span><span style="color:#000;">[</span><span style="color:#000;background:#FFFF00;">745FD484</span><span style="color:#000;">]</span></div>
<div class="row" style="left:4px;top:416px;color:#808080">745E2E0B</div>
<div class="row" style="left:96px;top:416px;color:#000">33C5</div>
<div class="row" style="left:244px;top:416px"><span style="color:#000;">xor</span> <span style="color:#008300;">eax</span><span style="color:#000;">,</span><span style="color:#008300;">ebp</span></div>
<div class="row" style="left:4px;top:429px;color:#808080">745E2E0D</div>
<div class="row" style="left:96px;top:429px;color:#000">8945 FC</div>
<div class="row" style="left:244px;top:429px"><span style="color:#000;">mov</span> <span style="color:#000080;">dword ptr </span><span style="color:#FF00FF;">ss</span><span style="color:#000;">:</span><span style="color:#000;background:#00FFFF;">[</span><span style="color:#B03434;">ebp</span><span style="color:#F27711;">-</span><span style="color:#828200;">4</span><span style="color:#000;background:#00FFFF;">]</span><span style="color:#000;">,</span><span style="color:#008300;">eax</span></div>
<div class="row" style="left:4px;top:442px;color:#808080">745E2E10</div>
<div class="row" style="left:96px;top:442px;color:#000">837D 0C 00</div>
<div class="row" style="left:244px;top:442px"><span style="color:#000;">cmp</span> <span style="color:#000080;">dword ptr </span><span style="color:#FF00FF;">ss</span><span style="color:#000;">:</span><span style="color:#000;background:#00FFFF;">[</span><span style="color:#B03434;">ebp</span><span style="color:#F27711;">+</span><span style="color:#828200;">C</span><span style="color:#000;background:#00FFFF;">]</span><span style="color:#000;">,</span><span style="color:#828200;">0</span></div>
<div class="row" style="left:4px;top:455px;color:#808080">745E2E14</div>
<div class="a" style="left:81px;top:460px;width:1px;height:1px;background:#FF0000"></div>
<div class="a" style="left:82px;top:461px;width:1px;height:1px;background:#FF0000"></div>
<div class="a" style="left:83px;top:462px;width:1px;height:1px;background:#FF0000"></div>
<div class="a" style="left:84px;top:461px;width:1px;height:1px;background:#FF0000"></div>
<div class="a" style="left:85px;top:460px;width:1px;height:1px;background:#FF0000"></div>
<div class="row" style="left:96px;top:455px;color:#000">74 17</div>
<div class="row" style="left:244px;top:455px"><span style="color:#FF0000;background:#FFFF00;">je</span> <span style="color:#000;background:#FFFF00;">rpcrt4.745E2E2D</span></div>
<div class="row" style="left:4px;top:468px;color:#808080">745E2E16</div>
<div class="a" style="left:118px;top:480px;width:56px;height:1px;background:#000"></div>
<div class="row" style="left:96px;top:468px;color:#000">A1 D0D85F74</div>
<div class="row" style="left:244px;top:468px"><span style="color:#000;">mov</span> <span style="color:#008300;">eax</span><span style="color:#000;">,</span><span style="color:#000080;">dword ptr </span><span style="color:#FF00FF;">ds</span><span style="color:#000;">:</span><span style="color:#000;">[</span><span style="color:#000;background:#FFFF00;">745FD8D0</span><span style="color:#000;">]</span></div>
<div class="row" style="left:4px;top:481px;color:#808080">745E2E1B</div>
<div class="row" style="left:96px;top:481px;color:#000">56</div>
<div class="row" style="left:244px;top:481px"><span style="color:#0000FF;">push</span> <span style="color:#008300;">esi</span></div>
<div class="row" style="left:523px;top:481px;color:#AA5500">esi:&amp;&quot;MZ&quot;</div>
<div class="row" style="left:4px;top:494px;color:#808080">745E2E1C</div>
<div class="row" style="left:96px;top:494px;color:#000">FF75 0C</div>
<div class="row" style="left:244px;top:494px"><span style="color:#0000FF;">push</span> <span style="color:#000080;">dword ptr </span><span style="color:#FF00FF;">ss</span><span style="color:#000;">:</span><span style="color:#000;background:#00FFFF;">[</span><span style="color:#B03434;">ebp</span><span style="color:#F27711;">+</span><span style="color:#828200;">C</span><span style="color:#000;background:#00FFFF;">]</span></div>
<div class="row" style="left:4px;top:507px;color:#808080">745E2E1F</div>
<div class="row" style="left:96px;top:507px;color:#000">8B70 20</div>
<div class="row" style="left:244px;top:507px"><span style="color:#000;">mov</span> <span style="color:#008300;">esi</span><span style="color:#000;">,</span><span style="color:#000080;">dword ptr </span><span style="color:#FF00FF;">ds</span><span style="color:#000;">:</span><span style="color:#000;">[</span><span style="color:#B03434;">eax</span><span style="color:#F27711;">+</span><span style="color:#828200;">20</span><span style="color:#000;">]</span></div>
<div class="row" style="left:523px;top:507px;color:#AA5500">esi:&amp;&quot;MZ&quot;</div>
</div>
<div class="sb" style="left:1052px;top:100px;width:16px;height:516px"></div>
<div class="thumb" style="left:1053px;top:509px;width:14px;height:17px"></div>
<svg class="a" style="left:0;top:0;overflow:visible" width="1" height="1"><path d="M1056.8 111.1 L1059.5 107.4 L1062.2 111.1" stroke="#555555" stroke-width="2.0" fill="none" stroke-linejoin="miter"/></svg>
<svg class="a" style="left:0;top:0;overflow:visible" width="1" height="1"><path d="M1056.8 604.9 L1059.5 608.6 L1062.2 604.9" stroke="#555555" stroke-width="2.0" fill="none" stroke-linejoin="miter"/></svg>
<div class="sb" style="left:144px;top:616px;width:924px;height:16px"></div>
<div class="thumb" style="left:161px;top:616px;width:449px;height:15px"></div>
<svg class="a" style="left:0;top:0;overflow:visible" width="1" height="1"><path d="M154.1 620.8 L150.4 623.5 L154.1 626.2" stroke="#555555" stroke-width="2.0" fill="none" stroke-linejoin="miter"/></svg>
<svg class="a" style="left:0;top:0;overflow:visible" width="1" height="1"><path d="M1040.9 620.8 L1044.6 623.5 L1040.9 626.2" stroke="#555555" stroke-width="2.0" fill="none" stroke-linejoin="miter"/></svg>
<svg class="a" style="left:0;top:0" width="142" height="640" viewBox="0 0 142 640">
<circle cx="135" cy="106.5" r="3.4" fill="#808080"/>
<circle cx="135" cy="119.5" r="3.4" fill="#808080"/>
<circle cx="135" cy="132.5" r="3.4" fill="#808080"/>
<circle cx="135" cy="145.5" r="3.4" fill="#808080"/>
<circle cx="135" cy="158.5" r="3.4" fill="#808080"/>
<circle cx="135" cy="171.5" r="3.4" fill="#808080"/>
<circle cx="135" cy="184.5" r="3.4" fill="#808080"/>
<circle cx="135" cy="197.5" r="3.4" fill="#808080"/>
<circle cx="135" cy="210.5" r="3.4" fill="#808080"/>
<circle cx="135" cy="223.5" r="3.4" fill="#808080"/>
<circle cx="135" cy="236.5" r="3.4" fill="#808080"/>
<circle cx="135" cy="249.5" r="3.4" fill="#808080"/>
<circle cx="135" cy="262.5" r="3.4" fill="#808080"/>
<circle cx="135" cy="275.5" r="3.4" fill="#808080"/>
<circle cx="135" cy="288.5" r="3.4" fill="#808080"/>
<circle cx="135" cy="301.5" r="3.4" fill="#808080"/>
<circle cx="135" cy="314.5" r="3.4" fill="#808080"/>
<circle cx="135" cy="327.5" r="3.4" fill="#808080"/>
<circle cx="135" cy="340.5" r="3.4" fill="#808080"/>
<circle cx="135" cy="353.5" r="3.4" fill="#808080"/>
<circle cx="135" cy="366.5" r="3.4" fill="#808080"/>
<circle cx="135" cy="379.5" r="3.4" fill="#808080"/>
<circle cx="135" cy="392.5" r="3.4" fill="#808080"/>
<circle cx="135" cy="405.5" r="3.4" fill="#808080"/>
<circle cx="135" cy="418.5" r="3.4" fill="#808080"/>
<circle cx="135" cy="431.5" r="3.4" fill="#808080"/>
<circle cx="135" cy="444.5" r="3.4" fill="#808080"/>
<circle cx="135" cy="457.5" r="3.4" fill="#808080"/>
<circle cx="135" cy="470.5" r="3.4" fill="#808080"/>
<circle cx="135" cy="483.5" r="3.4" fill="#808080"/>
<circle cx="135" cy="496.5" r="3.4" fill="#808080"/>
<circle cx="135" cy="509.5" r="3.4" fill="#808080"/>
<circle cx="135" cy="522.5" r="3.4" fill="#808080"/>
<circle cx="135" cy="535.5" r="3.4" fill="#808080"/>
<circle cx="135" cy="548.5" r="3.4" fill="#808080"/>
<circle cx="135" cy="561.5" r="3.4" fill="#808080"/>
<circle cx="135" cy="574.5" r="3.4" fill="#808080"/>
<circle cx="135" cy="587.5" r="3.4" fill="#808080"/>
<circle cx="135" cy="600.5" r="3.4" fill="#808080"/>
<circle cx="135" cy="613.5" r="3.4" fill="#808080"/>
<path d="M130 171.5 H102.5 V101" stroke="#FFA500" fill="none" stroke-width="1"/>
<path d="M98.5 104 L102.5 100.5 L106.5 104" stroke="#FFA500" fill="none" stroke-width="1"/>
<path d="M130 223.5 H102.5 V275.5 H129" stroke="#00BBFF" fill="none" stroke-width="1"/>
<path d="M126 272.0 L129.5 275.5 L126 279.0" stroke="#00BBFF" fill="none" stroke-width="1"/>
<path d="M130 353.5 H91.5 V236.5 H129" stroke="#FFA500" fill="none" stroke-width="1"/>
<path d="M126 233.0 L129.5 236.5 L126 240.0" stroke="#FFA500" fill="none" stroke-width="1"/>
<path d="M102 288.5 H130" stroke="#00BBFF" fill="none" stroke-width="2" stroke-dasharray="7 2.5"/>
<path d="M102 287.5 V366.5 H128" stroke="#00BBFF" fill="none" stroke-width="2" stroke-dasharray="7 2.5"/>
<path d="M125 362.5 L129 366.5 L125 370.5" stroke="#00BBFF" fill="none" stroke-width="2"/>
<rect x="0" y="373" width="22" height="13" fill="#4040FF"/>
<path d="M21 379 H128" stroke="#4040FF" stroke-width="2"/>
<path d="M123.5 374.5 L128.5 379 L123.5 383.5" stroke="#4040FF" fill="none" stroke-width="2"/>
<path d="M130 561.5 H102.5 V631.5" stroke="#00BBFF" fill="none" stroke-width="1" stroke-dasharray="3 2"/>
<path d="M99 627.5 L102.5 631.5 L106 627.5" stroke="#00BBFF" fill="none" stroke-width="1"/>
</svg>
<div class="row" style="left:0px;top:373px;color:#fff">EIP</div>
<div class="a" style="left:0;top:634px;width:1069px;height:58px;background:#FFF8F0;border:1px solid #8A929A;border-left:none"></div>
<div class="row" style="left:3px;top:636px">dword ptr ss:[ebp+8]=[005B4DA0 &lt;&amp;CreateProcessW&gt;]=&lt;kernel32.CreateProcessW&gt;</div>
<div class="row" style="left:3px;top:675px">.text:745E2DEF rpcrt4.dll:$92DEF #921EF</div>
<div class="a" style="left:1069px;top:99px;width:303px;height:593px;background:#F0F0F0"></div>
<div class="a s" style="left:1071px;top:100px;width:301px;height:21px;background:#E1E1E1;border:1px solid #ADADAD;text-align:center;line-height:19px;font-family:'Liberation Mono';font-size:11.67px">Hide FPU</div>
<div class="a" style="left:1070px;top:122px;width:302px;height:441px;background:#FFF8F0;border:1px solid #828790;border-right:none;border-bottom:none"></div>
<div class="a" style="left:1071px;top:123px;width:285px;height:422px;overflow:hidden">
<div class="row" style="left:7px;top:4px;line-height:12px;height:12px">EAX   00000001</div>
<div class="row" style="left:7px;top:16px;line-height:12px;height:12px">EBX   04E82588</div>
<div class="row" style="left:7px;top:28px;line-height:12px;height:12px">ECX   76184A2B     kernelbase.76184A2B</div>
<div class="row" style="left:7px;top:40px;line-height:12px;height:12px">EDX   00000001</div>
<div class="row" style="left:7px;top:52px;line-height:12px;height:12px">EBP   005B4D98</div>
<div class="row" style="left:7px;top:64px;line-height:12px;height:12px">ESP   <span style="color:#FF0000">005B4D00</span></div>
<div class="row" style="left:7px;top:76px;line-height:12px;height:12px">ESI   00E4A878     &amp;&quot;MZ&quot;</div>
<div class="row" style="left:7px;top:88px;line-height:12px;height:12px">EDI   745E2D52     rpcrt4.745E2D52</div>
<div class="a" style="left:49px;top:112px;width:56px;height:12px;background:#EEEEEE"></div>
<div class="row" style="left:7px;top:112px;line-height:12px;height:12px">EIP   <span style="color:#FF0000">745E2DF2</span>     rpcrt4.745E2DF2</div>
<div class="row" style="left:7px;top:136px;line-height:12px;height:12px">EFLAGS   00000246</div>
<div class="row" style="left:7px;top:148px;line-height:12px;height:12px">ZF 1  PF 1  AF 0</div>
<div class="row" style="left:7px;top:160px;line-height:12px;height:12px">OF 0  SF 0  DF 0</div>
<div class="row" style="left:7px;top:172px;line-height:12px;height:12px">CF 0  TF 0  IF 1</div>
<div class="row" style="left:7px;top:196px;line-height:12px;height:12px">LastError  000000CB (ERROR_ENVVAR_NOT_FOUND)</div>
<div class="row" style="left:7px;top:208px;line-height:12px;height:12px">LastStatus C0000100 (STATUS_VARIABLE_NOT_FOUND)</div>
<div class="row" style="left:7px;top:232px;line-height:12px;height:12px">GS 002B  FS 0053</div>
<div class="row" style="left:7px;top:244px;line-height:12px;height:12px">ES 002B  DS 002B</div>
<div class="row" style="left:7px;top:256px;line-height:12px;height:12px">CS 0023  SS 002B</div>
<div class="row" style="left:7px;top:280px;line-height:12px;height:12px">ST(0) 00000000000000000000 x87r0 Empty 0.000000000000000000</div>
<div class="row" style="left:7px;top:292px;line-height:12px;height:12px">ST(1) 00000000000000000000 x87r1 Empty 0.000000000000000000</div>
<div class="row" style="left:7px;top:304px;line-height:12px;height:12px">ST(2) 00000000000000000000 x87r2 Empty 0.000000000000000000</div>
<div class="row" style="left:7px;top:316px;line-height:12px;height:12px">ST(3) 00000000000000000000 x87r3 Empty 0.000000000000000000</div>
<div class="row" style="left:7px;top:328px;line-height:12px;height:12px">ST(4) 00000000000000000000 x87r4 Empty 0.000000000000000000</div>
<div class="row" style="left:7px;top:340px;line-height:12px;height:12px">ST(5) 00000000000000000000 x87r5 Empty 0.000000000000000000</div>
<div class="row" style="left:7px;top:352px;line-height:12px;height:12px">ST(6) 3FFF8000000000000000 x87r6 Empty 1.000000000000000000</div>
<div class="row" style="left:7px;top:364px;line-height:12px;height:12px">ST(7) 3FFF8DB70C975DF22363 x87r7 Empty 1.107214700000000000</div>
<div class="row" style="left:7px;top:388px;line-height:12px;height:12px">x87TagWord FFFF</div>
<div class="row" style="left:7px;top:400px;line-height:12px;height:12px">x87TW_0 3 (Empty)   x87TW_1 3 (Empty)</div>
<div class="row" style="left:7px;top:412px;line-height:12px;height:12px">x87TW_2 3 (Empty)   x87TW_3 3 (Empty)</div>
<div class="a" style="left:7px;top:14px;width:21px;height:2px;background:#A00000"></div>
<div class="a" style="left:7px;top:38px;width:21px;height:2px;background:#A00000"></div>
<div class="a" style="left:7px;top:50px;width:21px;height:2px;background:#A00000"></div>
<div class="a" style="left:7px;top:62px;width:21px;height:2px;background:#008000"></div>
<div class="a" style="left:7px;top:74px;width:21px;height:2px;background:#808000"></div>
<div class="a" style="left:70px;top:266px;width:14px;height:2px;background:#008000"></div>
</div>
<div class="sb" style="left:1356px;top:123px;width:16px;height:422px"></div>
<div class="thumb" style="left:1357px;top:140px;width:14px;height:165px"></div>
<svg class="a" style="left:0;top:0;overflow:visible" width="1" height="1"><path d="M1361.8 133.1 L1364.5 129.4 L1367.2 133.1" stroke="#555555" stroke-width="2.0" fill="none" stroke-linejoin="miter"/></svg>
<svg class="a" style="left:0;top:0;overflow:visible" width="1" height="1"><path d="M1361.8 534.9 L1364.5 538.6 L1367.2 534.9" stroke="#555555" stroke-width="2.0" fill="none" stroke-linejoin="miter"/></svg>
<div class="sb" style="left:1071px;top:545px;width:301px;height:17px"></div>
<div class="thumb" style="left:1087px;top:546px;width:71px;height:15px"></div>
<svg class="a" style="left:0;top:0;overflow:visible" width="1" height="1"><path d="M1080.1 550.8 L1076.4 553.5 L1080.1 556.2" stroke="#555555" stroke-width="2.0" fill="none" stroke-linejoin="miter"/></svg>
<svg class="a" style="left:0;top:0;overflow:visible" width="1" height="1"><path d="M1345.9 550.8 L1349.6 553.5 L1345.9 556.2" stroke="#555555" stroke-width="2.0" fill="none" stroke-linejoin="miter"/></svg>
<div class="a" style="left:1071px;top:563px;width:184px;height:20px;background:#E1E1E1;border:1px solid #ADADAD"></div>
<div class="a s" style="left:1075px;top:566px">Default (stdcall)</div>
<svg class="a" style="left:1241px;top:569px" width="10" height="8"><path d="M1 2 L9 2 L5 7 Z" fill="#000"/></svg>
<div class="a" style="left:1259px;top:563px;width:38px;height:20px;background:#fff;border:1px solid #7A7A7A"></div>
<div class="a s" style="left:1262px;top:566px">5</div>
<div class="a" style="left:1281px;top:565px;width:14px;height:16px;background:#F0F0F0;border:1px solid #D0D0D0"></div>
<svg class="a" style="left:1283px;top:566px" width="10" height="14"><path d="M2 5 L5 2 L8 5 Z M2 9 L5 12 L8 9 Z" fill="#000"/></svg>
<div class="a" style="left:1300px;top:566px;width:13px;height:13px;background:#fff;border:1px solid #333"></div>
<div class="a s" style="left:1318px;top:566px">Unlocked</div>
<div class="a" style="left:1070px;top:583px;width:302px;height:109px;background:#FFF8F0;border-top:1px solid #8A929A;border-left:1px solid #8A929A"></div>
<div class="a" style="left:1071px;top:584px;width:284px;height:13px;background:#C0C0C0"></div>
<div class="a" style="left:1071px;top:584px;width:284px;height:91px;overflow:hidden">
<div class="row" style="left:4px;top:1px">1: [esp+4] 01370000 L&quot;C:\\WINDOWS\\SysWO</div>
<div class="row" style="left:4px;top:14px">2: [esp+8] 00000000</div>
<div class="row" style="left:4px;top:27px">3: [esp+C] 00000000</div>
<div class="row" style="left:4px;top:40px">4: [esp+10] 00000001</div>
<div class="row" style="left:4px;top:53px">5: [esp+14] 00000004</div>
</div>
<div class="sb" style="left:1355px;top:584px;width:17px;height:91px"></div>
<svg class="a" style="left:0;top:0;overflow:visible" width="1" height="1"><path d="M1361.8 595.1 L1364.5 591.4 L1367.2 595.1" stroke="#C8C8C8" stroke-width="2.0" fill="none" stroke-linejoin="miter"/></svg>
<svg class="a" style="left:0;top:0;overflow:visible" width="1" height="1"><path d="M1361.8 662.9 L1364.5 666.6 L1367.2 662.9" stroke="#C8C8C8" stroke-width="2.0" fill="none" stroke-linejoin="miter"/></svg>
<div class="sb" style="left:1071px;top:675px;width:301px;height:16px"></div>
<div class="thumb" style="left:1088px;top:676px;width:210px;height:14px"></div>
<svg class="a" style="left:0;top:0;overflow:visible" width="1" height="1"><path d="M1080.1 679.8 L1076.4 682.5 L1080.1 685.2" stroke="#555555" stroke-width="2.0" fill="none" stroke-linejoin="miter"/></svg>
<svg class="a" style="left:0;top:0;overflow:visible" width="1" height="1"><path d="M1344.9 679.8 L1348.6 682.5 L1344.9 685.2" stroke="#555555" stroke-width="2.0" fill="none" stroke-linejoin="miter"/></svg>
<div class="a" style="left:0;top:691px;width:1372px;height:1px;background:#8A929A"></div>
<div class="a" style="left:0;top:692px;width:831px;height:26px;background:#F0F0F0"></div>
<div class="a" style="left:0px;top:696px;width:84px;height:22px;background:#F0F0F0;border:1px solid #D9D9D9;border-bottom:none"></div>
<div class="a s" style="left:30px;top:700px">Dump 1</div>
<div class="a" style="left:83px;top:694px;width:90px;height:24px;background:#fff"></div>
<div class="a s" style="left:117px;top:700px">Dump 2</div>
<div class="a" style="left:173px;top:696px;width:87px;height:22px;background:#F0F0F0;border:1px solid #D9D9D9;border-bottom:none"></div>
<div class="a s" style="left:203px;top:700px">Dump 3</div>
<div class="a" style="left:259px;top:696px;width:87px;height:22px;background:#F0F0F0;border:1px solid #D9D9D9;border-bottom:none"></div>
<div class="a s" style="left:291px;top:700px">Dump 4</div>
<div class="a" style="left:345px;top:696px;width:88px;height:22px;background:#F0F0F0;border:1px solid #D9D9D9;border-bottom:none"></div>
<div class="a s" style="left:378px;top:700px">Dump 5</div>
<div class="a" style="left:432px;top:696px;width:92px;height:22px;background:#F0F0F0;border:1px solid #D9D9D9;border-bottom:none"></div>
<div class="a s" style="left:465px;top:700px">Watch 1</div>
<div class="a" style="left:523px;top:696px;width:77px;height:22px;background:#F0F0F0;border:1px solid #D9D9D9;border-bottom:none"></div>
<div class="a s" style="left:557px;top:700px">Locals</div>
<div class="a" style="left:599px;top:696px;width:77px;height:22px;background:#F0F0F0;border:1px solid #D9D9D9;border-bottom:none"></div>
<div class="a s" style="left:632px;top:700px">Struct</div>
<svg class="a" style="left:0;top:692px" width="700" height="26" viewBox="0 0 700 26">
<rect x="14" y="6" width="13" height="11" rx="1.5" fill="#E4E6EA" stroke="#8A8A90" stroke-width="0.7"/><path d="M17.5 7 V16 M20.5 7 V16 M23.5 7 V16" stroke="#A8AAB0" stroke-width="0.8"/><rect x="10" y="9" width="5" height="8" rx="1" fill="#F2B400" stroke="#B08000" stroke-width="0.5"/><rect x="11" y="10" width="3" height="3" fill="#4A80C0"/><circle cx="13" cy="18" r="1.8" fill="#333"/><circle cx="24" cy="18" r="1.8" fill="#333"/>
<rect x="101" y="6" width="13" height="11" rx="1.5" fill="#E4E6EA" stroke="#8A8A90" stroke-width="0.7"/><path d="M104.5 7 V16 M107.5 7 V16 M110.5 7 V16" stroke="#A8AAB0" stroke-width="0.8"/><rect x="97" y="9" width="5" height="8" rx="1" fill="#F2B400" stroke="#B08000" stroke-width="0.5"/><rect x="98" y="10" width="3" height="3" fill="#4A80C0"/><circle cx="100" cy="18" r="1.8" fill="#333"/><circle cx="111" cy="18" r="1.8" fill="#333"/>
<rect x="187" y="6" width="13" height="11" rx="1.5" fill="#E4E6EA" stroke="#8A8A90" stroke-width="0.7"/><path d="M190.5 7 V16 M193.5 7 V16 M196.5 7 V16" stroke="#A8AAB0" stroke-width="0.8"/><rect x="183" y="9" width="5" height="8" rx="1" fill="#F2B400" stroke="#B08000" stroke-width="0.5"/><rect x="184" y="10" width="3" height="3" fill="#4A80C0"/><circle cx="186" cy="18" r="1.8" fill="#333"/><circle cx="197" cy="18" r="1.8" fill="#333"/>
<rect x="274" y="6" width="13" height="11" rx="1.5" fill="#E4E6EA" stroke="#8A8A90" stroke-width="0.7"/><path d="M277.5 7 V16 M280.5 7 V16 M283.5 7 V16" stroke="#A8AAB0" stroke-width="0.8"/><rect x="270" y="9" width="5" height="8" rx="1" fill="#F2B400" stroke="#B08000" stroke-width="0.5"/><rect x="271" y="10" width="3" height="3" fill="#4A80C0"/><circle cx="273" cy="18" r="1.8" fill="#333"/><circle cx="284" cy="18" r="1.8" fill="#333"/>
<rect x="361" y="6" width="13" height="11" rx="1.5" fill="#E4E6EA" stroke="#8A8A90" stroke-width="0.7"/><path d="M364.5 7 V16 M367.5 7 V16 M370.5 7 V16" stroke="#A8AAB0" stroke-width="0.8"/><rect x="357" y="9" width="5" height="8" rx="1" fill="#F2B400" stroke="#B08000" stroke-width="0.5"/><rect x="358" y="10" width="3" height="3" fill="#4A80C0"/><circle cx="360" cy="18" r="1.8" fill="#333"/><circle cx="371" cy="18" r="1.8" fill="#333"/>
<g transform="translate(8,3)"><path d="M437 8 L439 3 L443 6 L447 6 L451 3 L452 8 Q454 13 449 17 L441 17 Q435 13 437 8 Z" fill="#D89040" stroke="#8A5020" stroke-width="0.6"/><ellipse cx="445" cy="13" rx="4" ry="3.2" fill="#F4E0C0"/><circle cx="442" cy="10" r="1" fill="#222"/><circle cx="448" cy="10" r="1" fill="#222"/><circle cx="445" cy="12.5" r="0.9" fill="#222"/></g>
<text x="535" y="17" font-family="Liberation Serif" font-size="11" fill="#333">[<tspan font-style="italic">x</tspan>=]</text>
<path d="M616 21 L622 9 Q624 4 620 4 Q617 4 617 7" stroke="#D83030" stroke-width="2.6" fill="none" stroke-linecap="round"/><path d="M617 18 L619 19 M619 14 L621 15 M621 10 L623 10" stroke="#fff" stroke-width="1"/>
</svg>
<div class="a" style="left:0;top:718px;width:830px;height:41px;background:#FFF8F0;border-top:1px solid #A0A0A0"></div>
<div class="a" style="left:0;top:718px;width:812px;height:16px;background:#BDBDBD;border-bottom:2px solid #9A9A9A"></div>
<div class="a" style="left:61px;top:719px;width:2px;height:15px;background:#9A9A9A"></div>
<div class="a" style="left:399px;top:719px;width:2px;height:15px;background:#9A9A9A"></div>
<div class="a" style="left:518px;top:719px;width:2px;height:15px;background:#9A9A9A"></div>
<div class="row" style="left:3px;top:720px">Address</div>
<div class="row" style="left:67px;top:720px">Hex</div>
<div class="row" style="left:404px;top:720px">ASCII</div>
<div class="a" style="left:62px;top:734px;width:1px;height:25px;background:#808080"></div>
<div class="a" style="left:147px;top:734px;width:1px;height:25px;background:#808080"></div>
<div class="a" style="left:231px;top:734px;width:1px;height:25px;background:#808080"></div>
<div class="a" style="left:315px;top:734px;width:1px;height:25px;background:#808080"></div>
<div class="a" style="left:399px;top:734px;width:1px;height:25px;background:#808080"></div>
<div class="a" style="left:518px;top:734px;width:1px;height:25px;background:#808080"></div>
<div class="a" style="left:64px;top:734px;width:22px;height:13px;background:#C0C0C0"></div>
<div class="row" style="left:3px;top:735px">779F0000</div>
<div class="row" style="left:67px;top:735px"><span style="color:#800080">4D</span> <span style="color:#800080">5A</span> <span style="color:#000">90</span> <span style="color:#008000">00</span> <span style="color:#000">03</span> <span style="color:#008000">00</span> <span style="color:#008000">00</span> <span style="color:#008000">00</span> <span style="color:#000">04</span> <span style="color:#008000">00</span> <span style="color:#008000">00</span> <span style="color:#008000">00</span> <span style="color:#800000">FF</span> <span style="color:#800000">FF</span> <span style="color:#008000">00</span> <span style="color:#008000">00</span></div>
<div class="a" style="left:67px;top:746px;width:77px;height:2px;background:#000080"></div>
<div class="a" style="left:402px;top:734px;width:10px;height:13px;background:#C0C0C0"></div>
<div class="row" style="left:404px;top:735px"><span style="color:#800080">MZ</span>..........<span style="color:#800000">ÿÿ</span>..</div>
<div class="row" style="left:3px;top:748px">779F0010</div>
<div class="row" style="left:67px;top:748px"><span style="color:#000">B8</span> <span style="color:#008000">00</span> <span style="color:#008000">00</span> <span style="color:#008000">00</span> <span style="color:#008000">00</span> <span style="color:#008000">00</span> <span style="color:#008000">00</span> <span style="color:#008000">00</span> <span style="color:#800080">40</span> <span style="color:#008000">00</span> <span style="color:#008000">00</span> <span style="color:#008000">00</span> <span style="color:#008000">00</span> <span style="color:#008000">00</span> <span style="color:#008000">00</span> <span style="color:#008000">00</span></div>
<div class="row" style="left:404px;top:748px">,.......<span style="color:#800080">@</span>.......</div>
<div class="sb" style="left:812px;top:719px;width:18px;height:40px"></div>
<div class="thumb" style="left:813px;top:735px;width:16px;height:18px"></div>
<svg class="a" style="left:0;top:0;overflow:visible" width="1" height="1"><path d="M817.8 729.1 L820.5 725.4 L823.2 729.1" stroke="#555555" stroke-width="2.0" fill="none" stroke-linejoin="miter"/></svg>
<div class="a" style="left:831px;top:693px;width:541px;height:66px;background:#FFF8F0;border-left:1px solid #8A929A;border-top:1px solid #8A929A"></div>
<div class="a" style="left:895px;top:694px;width:1px;height:65px;background:#A0A0A0"></div>
<div class="a" style="left:897px;top:694px;width:2px;height:65px;background:#000"></div>
<div class="row" style="left:836px;top:695px;color:#808080">005B4D80</div>
<div class="row" style="left:903px;top:695px">00000000</div>
<div class="row" style="left:836px;top:708px;color:#808080">005B4D84</div>
<div class="row" style="left:903px;top:708px">005B4D9C</div>
<div class="row" style="left:836px;top:721px;color:#808080">005B4D88</div>
<div class="row" style="left:903px;top:721px">0000000A</div>
<div class="row" style="left:836px;top:734px;color:#808080">005B4D8C</div>
<div class="row" style="left:903px;top:734px">005B4DD4</div>
<div class="row" style="left:967px;top:734px">&quot;x¨ä&quot;</div>
<div class="row" style="left:836px;top:747px;color:#808080">005B4D90</div>
<div class="row" style="left:903px;top:747px">0000000A</div>
<div class="sb" style="left:1356px;top:694px;width:16px;height:65px"></div>
<svg class="a" style="left:0;top:0;overflow:visible" width="1" height="1"><path d="M1360.8 705.1 L1363.5 701.4 L1366.2 705.1" stroke="#555555" stroke-width="2.0" fill="none" stroke-linejoin="miter"/></svg>
</body></html>
